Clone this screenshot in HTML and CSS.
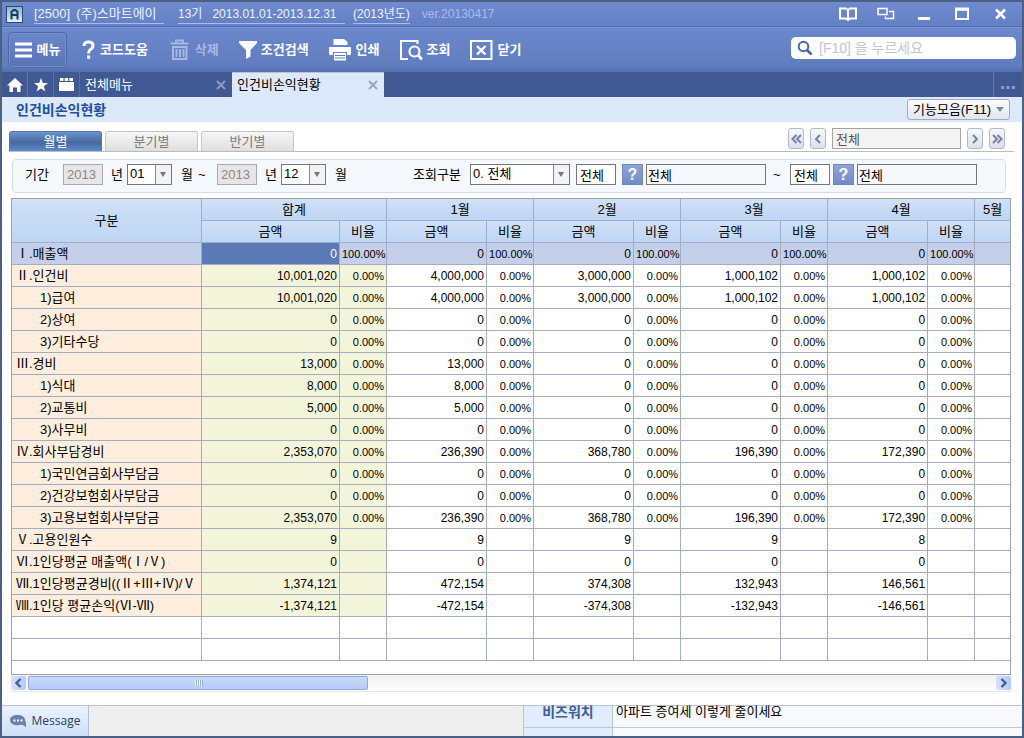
FILE: index.html
```html
<!DOCTYPE html>
<html lang="ko">
<head>
<meta charset="utf-8">
<title>인건비손익현황</title>
<link rel="stylesheet" href="styles.css">
</head>
<body>
<div class="window">
  <header class="titlebar">
    <svg class="app-icon" width="17" height="17" viewBox="0 0 17 17"><defs><linearGradient id="app" x2="0" y2="1"><stop stop-color="#7fb4cc"/><stop offset="1" stop-color="#e3f5f8"/></linearGradient></defs><rect x=".5" y=".5" width="16" height="16" fill="url(#app)" stroke="#2f4778"/><path d="M5.500 13.500V6L7.500 4H9.500L11.500 6V13.500M5.500 9H11.500" fill="none" stroke="#1d3b55" stroke-width="2"/></svg>
    <span class="company"><span>[2500]</span><span>(주)스마트에이</span></span>
    <span class="period"><span>13기</span><span>2013.01.01-2013.12.31</span></span>
    <span class="year">(2013년도)</span>
    <span class="version">ver.20130417</span>
    <div class="window-buttons">
      <button aria-label="도움말"><svg width="18" height="14" viewBox="0 0 18 14"><path d="M1 1.500H7L9 3L11 1.500H17V11.500H11L9 13L7 11.500H1ZM9 3V12" fill="none" stroke="#fff" stroke-width="2"/></svg></button>
      <button aria-label="창 전환"><svg width="18" height="14" viewBox="0 0 18 14"><path d="M1 1.500H10V7.500H1ZM12 4.500H16.500V11.500H8.500V9.500" fill="none" stroke="#fff" stroke-width="1.500"/></svg></button>
      <button aria-label="최소화"><svg width="18" height="14" viewBox="0 0 18 14"><path d="M3 11.500H15" stroke="#fff" stroke-width="3"/></svg></button>
      <button aria-label="최대화"><svg width="18" height="14" viewBox="0 0 18 14"><path d="M3 2.500H15V12H3Z" fill="none" stroke="#fff" stroke-width="2"/><path d="M2 2H16" stroke="#fff" stroke-width="3"/></svg></button>
      <button aria-label="닫기"><svg width="18" height="14" viewBox="0 0 18 14"><path d="M5 2.500L14 11.500M14 2.500L5 11.500" stroke="#fff" stroke-width="2.500"/></svg></button>
    </div>
  </header>

  <div class="toolbar">
    <button class="tool menu"><svg width="18" height="16" viewBox="0 0 18 16"><path d="M0 2H17M0 8H17M0 14H17" stroke="#fff" stroke-width="3"/></svg>메뉴</button>
    <button class="tool"><svg width="14" height="20" viewBox="0 0 14 20"><path d="M2 6Q2 2 6.500 2Q11 2 11 5.500Q11 8 8.500 9.500Q6.500 10.800 6.500 13.500" fill="none" stroke="#fff" stroke-width="3"/><rect x="5" y="15.500" width="3.200" height="3.200" fill="#fff"/></svg>코드도움</button>
    <button class="tool" disabled><svg width="23" height="22" viewBox="0 0 23 22"><path d="M2.500 4.500H20.500M8 4V1.500H15V4" fill="none" stroke="#a6b8e4" stroke-width="2"/><path d="M5 8H18.500V20H5ZM8.500 10V18M12 10V18M15.500 10V18" fill="none" stroke="#a6b8e4" stroke-width="2"/></svg>삭제</button>
    <button class="tool"><svg width="18" height="20" viewBox="0 0 18 20"><path d="M0 1H18V3L11.500 10V16.500L7 19V10L0 3Z" fill="#fff"/></svg>조건검색</button>
    <button class="tool"><svg width="23" height="22" viewBox="0 0 23 22"><path d="M4.500 0H15L18.500 3V6H4.500ZM0 8H22V16H18V13H4V16H0Z" fill="#fff"/><path d="M5 14H17V21.500H5Z" fill="#fff"/><path d="M6 16.500H16M6 19H16" stroke="#637fc2"/></svg>인쇄</button>
    <button class="tool"><svg width="23" height="22" viewBox="0 0 23 22"><path d="M8 20H1V2H17.500V5" fill="none" stroke="#fff" stroke-width="2"/><circle cx="14.500" cy="12.500" r="5" fill="none" stroke="#fff" stroke-width="2.200"/><path d="M18 16L22 20.500" stroke="#fff" stroke-width="2.800"/></svg>조회</button>
    <button class="tool"><svg width="23" height="22" viewBox="0 0 23 22"><path d="M1 2H21.500V20H1Z" fill="none" stroke="#fff" stroke-width="2"/><path d="M7 7L15.500 15.500M15.500 7L7 15.500" stroke="#fff" stroke-width="2.400"/></svg>닫기</button>
    <label class="search"><svg width="16" height="16" viewBox="0 0 16 16"><circle cx="6.500" cy="6.500" r="4.800" fill="none" stroke="#4867a8" stroke-width="2"/><path d="M10 10L14.500 14.500" stroke="#4867a8" stroke-width="2.600"/></svg><input type="text" aria-label="메뉴 검색" placeholder="[F10] 을 누르세요"></label>
  </div>

  <nav class="tabs">
    <button class="tab-icon" aria-label="홈"><svg width="16" height="14" viewBox="0 0 16 14"><path d="M8 0L16 7.500H13.500V14H10V9.500H6V14H2.500V7.500H0Z" fill="#fff"/></svg></button>
    <button class="tab-icon" aria-label="즐겨찾기"><svg width="14" height="14" viewBox="0 0 14 14"><path d="M7 0L8.800 5H14L9.800 8.300L11.400 13.500L7 10.400L2.600 13.500L4.200 8.300L0 5H5.200Z" fill="#fff"/></svg></button>
    <button class="tab-icon" aria-label="폴더"><svg width="15" height="13" viewBox="0 0 15 13"><path d="M1 0H4.500V3H1ZM5.700 0H9.200V3H5.700ZM10.400 0H14V3H10.400ZM0 4H15V13H0Z" fill="#fff"/></svg></button>
    <div class="tab"><a href="#all">전체메뉴</a><button aria-label="전체메뉴 탭 닫기"><svg width="10" height="10" viewBox="0 0 10 10"><path d="M1 1L9 9M9 1L1 9" stroke="#8d9cc2" stroke-width="2"/></svg></button></div>
    <div class="tab active"><a href="#labor">인건비손익현황</a><button aria-label="인건비손익현황 탭 닫기"><svg width="10" height="10" viewBox="0 0 10 10"><path d="M1 1L9 9M9 1L1 9" stroke="#9aa5b8" stroke-width="2"/></svg></button></div>
    <button class="more" aria-label="더보기"><svg width="14" height="3" viewBox="0 0 14 3"><path d="M0 0H3V3H0ZM5.500 0H8.500V3H5.500ZM11 0H14V3H11Z" fill="#8b9cc6"/></svg></button>
  </nav>

  <div class="page-title">
    <h1>인건비손익현황</h1>
    <button>기능모음(F11)<span class="caret"></span></button>
  </div>

  <main>
    <div class="view-bar">
      <div class="views"><button class="selected">월별</button><button>분기별</button><button>반기별</button></div>
      <div class="pager">
        <button aria-label="처음"><svg width="11" height="10" viewBox="0 0 11 10"><path d="M5.500 1L1.500 5L5.500 9M10 1L6 5L10 9" fill="none" stroke="#7482a4" stroke-width="2"/></svg></button>
        <button aria-label="이전"><svg width="6" height="10" viewBox="0 0 6 10"><path d="M5 1L1 5L5 9" fill="none" stroke="#7482a4" stroke-width="2"/></svg></button>
        <input type="text" aria-label="대상" value="전체" readonly>
        <button aria-label="다음"><svg width="6" height="10" viewBox="0 0 6 10"><path d="M1 1L5 5L1 9" fill="none" stroke="#7482a4" stroke-width="2"/></svg></button>
        <button aria-label="마지막"><svg width="11" height="10" viewBox="0 0 11 10"><path d="M1 1L5 5L1 9M5.500 1L9.500 5L5.500 9" fill="none" stroke="#7482a4" stroke-width="2"/></svg></button>
      </div>
    </div>

    <form class="filter">
      <label for="y1">기간</label><input id="y1" type="text" value="2013" disabled>
      <label for="m1">년</label><span class="select"><select id="m1"><option>01</option></select></span>
      <span>월</span><span>~</span>
      <input id="y2" aria-label="종료 연도" type="text" value="2013" disabled>
      <label for="m2">년</label><span class="select"><select id="m2"><option>12</option></select></span>
      <span>월</span>
      <label for="kind">조회구분</label><span class="select"><select id="kind"><option>0. 전체</option></select></span>
      <input type="text" aria-label="시작 코드" value="전체">
      <button type="button" class="lookup" aria-label="시작 코드 찾기">?</button>
      <input class="name" type="text" aria-label="시작 이름" value="전체" readonly>
      <span>~</span>
      <input type="text" aria-label="종료 코드" value="전체">
      <button type="button" class="lookup" aria-label="종료 코드 찾기">?</button>
      <input class="name" type="text" aria-label="종료 이름" value="전체" readonly>
    </form>

    <div class="grid">
      <table>
        <colgroup><col class="c-name"><col class="c-total"><col class="c-rate"><col class="c-amount"><col class="c-rate"><col class="c-amount"><col class="c-rate"><col class="c-amount"><col class="c-rate"><col class="c-amount"><col class="c-rate"><col></colgroup>
        <thead>
          <tr><th rowspan="2">구분</th><th colspan="2">합계</th><th colspan="2">1월</th><th colspan="2">2월</th><th colspan="2">3월</th><th colspan="2">4월</th><th>5월</th></tr>
          <tr><th>금액</th><th>비율</th><th>금액</th><th>비율</th><th>금액</th><th>비율</th><th>금액</th><th>비율</th><th>금액</th><th>비율</th><th></th></tr>
        </thead>
        <tbody>
          <tr class="current"><th>Ⅰ.매출액</th><td class="cursor">0</td><td>100.00%</td><td>0</td><td>100.00%</td><td>0</td><td>100.00%</td><td>0</td><td>100.00%</td><td>0</td><td>100.00%</td><td></td></tr>
          <tr><th>Ⅱ.인건비</th><td>10,001,020</td><td>0.00%</td><td>4,000,000</td><td>0.00%</td><td>3,000,000</td><td>0.00%</td><td>1,000,102</td><td>0.00%</td><td>1,000,102</td><td>0.00%</td><td></td></tr>
          <tr><th class="sub">1)급여</th><td>10,001,020</td><td>0.00%</td><td>4,000,000</td><td>0.00%</td><td>3,000,000</td><td>0.00%</td><td>1,000,102</td><td>0.00%</td><td>1,000,102</td><td>0.00%</td><td></td></tr>
          <tr><th class="sub">2)상여</th><td>0</td><td>0.00%</td><td>0</td><td>0.00%</td><td>0</td><td>0.00%</td><td>0</td><td>0.00%</td><td>0</td><td>0.00%</td><td></td></tr>
          <tr><th class="sub">3)기타수당</th><td>0</td><td>0.00%</td><td>0</td><td>0.00%</td><td>0</td><td>0.00%</td><td>0</td><td>0.00%</td><td>0</td><td>0.00%</td><td></td></tr>
          <tr><th>Ⅲ.경비</th><td>13,000</td><td>0.00%</td><td>13,000</td><td>0.00%</td><td>0</td><td>0.00%</td><td>0</td><td>0.00%</td><td>0</td><td>0.00%</td><td></td></tr>
          <tr><th class="sub">1)식대</th><td>8,000</td><td>0.00%</td><td>8,000</td><td>0.00%</td><td>0</td><td>0.00%</td><td>0</td><td>0.00%</td><td>0</td><td>0.00%</td><td></td></tr>
          <tr><th class="sub">2)교통비</th><td>5,000</td><td>0.00%</td><td>5,000</td><td>0.00%</td><td>0</td><td>0.00%</td><td>0</td><td>0.00%</td><td>0</td><td>0.00%</td><td></td></tr>
          <tr><th class="sub">3)사무비</th><td>0</td><td>0.00%</td><td>0</td><td>0.00%</td><td>0</td><td>0.00%</td><td>0</td><td>0.00%</td><td>0</td><td>0.00%</td><td></td></tr>
          <tr><th>Ⅳ.회사부담경비</th><td>2,353,070</td><td>0.00%</td><td>236,390</td><td>0.00%</td><td>368,780</td><td>0.00%</td><td>196,390</td><td>0.00%</td><td>172,390</td><td>0.00%</td><td></td></tr>
          <tr><th class="sub">1)국민연금회사부담금</th><td>0</td><td>0.00%</td><td>0</td><td>0.00%</td><td>0</td><td>0.00%</td><td>0</td><td>0.00%</td><td>0</td><td>0.00%</td><td></td></tr>
          <tr><th class="sub">2)건강보험회사부담금</th><td>0</td><td>0.00%</td><td>0</td><td>0.00%</td><td>0</td><td>0.00%</td><td>0</td><td>0.00%</td><td>0</td><td>0.00%</td><td></td></tr>
          <tr><th class="sub">3)고용보험회사부담금</th><td>2,353,070</td><td>0.00%</td><td>236,390</td><td>0.00%</td><td>368,780</td><td>0.00%</td><td>196,390</td><td>0.00%</td><td>172,390</td><td>0.00%</td><td></td></tr>
          <tr><th>Ⅴ.고용인원수</th><td>9</td><td></td><td>9</td><td></td><td>9</td><td></td><td>9</td><td></td><td>8</td><td></td><td></td></tr>
          <tr><th>Ⅵ.1인당평균 매출액(Ⅰ/Ⅴ)</th><td>0</td><td></td><td>0</td><td></td><td>0</td><td></td><td>0</td><td></td><td>0</td><td></td><td></td></tr>
          <tr><th>Ⅶ.1인당평균경비((Ⅱ+Ⅲ+Ⅳ)/Ⅴ</th><td>1,374,121</td><td></td><td>472,154</td><td></td><td>374,308</td><td></td><td>132,943</td><td></td><td>146,561</td><td></td><td></td></tr>
          <tr><th>Ⅷ.1인당 평균손익(Ⅵ-Ⅶ)</th><td>-1,374,121</td><td></td><td>-472,154</td><td></td><td>-374,308</td><td></td><td>-132,943</td><td></td><td>-146,561</td><td></td><td></td></tr>
          <tr class="blank"><td></td><td></td><td></td><td></td><td></td><td></td><td></td><td></td><td></td><td></td><td></td><td></td></tr>
          <tr class="blank"><td></td><td></td><td></td><td></td><td></td><td></td><td></td><td></td><td></td><td></td><td></td><td></td></tr>
        </tbody>
      </table>
    </div>
    <div class="scrollbar">
      <button aria-label="왼쪽으로"><svg width="7" height="10" viewBox="0 0 7 10"><path d="M5.500 1L1.500 5L5.500 9" fill="none" stroke="#3f5f9a" stroke-width="2.400"/></svg></button>
      <div class="thumb"><i></i><i></i><i></i><i></i></div>
      <button class="right" aria-label="오른쪽으로"><svg width="7" height="10" viewBox="0 0 7 10"><path d="M1.500 1L5.500 5L1.500 9" fill="none" stroke="#3f5f9a" stroke-width="2.400"/></svg></button>
    </div>
  </main>

  <footer>
    <button class="message"><svg width="17" height="13" viewBox="0 0 17 13"><path d="M7.500 0C12 0 15 2 15 5C15 6 16.500 7 16 12.500C15 10.500 13 10 11.500 9.800C4 11.500 0 8.500 0 5C0 2 3 0 7.500 0Z" fill="#6a7fac"/><path d="M3.500 5.500H5.500M7 5.500H9M10.500 5.500H12.500" stroke="#fff" stroke-width="2"/></svg>Message</button>
    <div class="status"></div>
    <div class="news"><strong>비즈워치</strong><a href="#news">아파트 증여세 이렇게 줄이세요</a><span class="next-label"></span><span></span></div>
  </footer>
</div>
</body>
</html>
```

FILE: styles.css
```css
* { box-sizing: border-box; }
body {
  margin: 0;
  font: 13px/16px "Liberation Sans", "Noto Sans CJK KR", sans-serif;
  color: #000;
}
button, input, select { font: inherit; color: inherit; margin: 0; }
button { padding: 0; border: 0; background: none; }
a { color: inherit; text-decoration: none; }
svg { display: block; flex: none; }

.window {
  display: flex;
  flex-direction: column;
  min-height: 100vh;
  border: 2px solid #4c6084;
  background: #fff;
}

/* Title bar */
.titlebar {
  display: flex;
  align-items: center;
  height: 25px;
  padding: 0 13px 0 4px;
  border-bottom: 1px solid #506cae;
  background: linear-gradient(#6f8ace, #6480c5);
  color: #eef3ff;
  font-size: 12px;
}
.company, .period, .year {
  display: flex;
  height: 20px;
  align-items: center;
  border-bottom: 1px solid #a9bdeb;
}
.company { width: 130px; gap: 6px; margin-left: 11px; font-size: 13px; }
.period { width: 167px; gap: 10px; margin-left: 14px; }
.year { margin-left: 8px; }
.version { margin-left: 12px; font-size: 12px; color: #a9bcec; }
.window-buttons { display: flex; gap: 20px; margin-left: auto; }

/* Toolbar */
.toolbar {
  display: flex;
  align-items: center;
  gap: 20px;
  height: 45px;
  padding: 0 6px 0 6px;
  border-top: 1px solid #7a94d5;
  background: linear-gradient(#6c88cd, #607dbf 85%, #536fb0);
}
.tool {
  display: flex;
  align-items: center;
  gap: 4px;
  color: #fff;
  font-weight: bold;
  white-space: nowrap;
}
.tool:disabled { color: #a6b8e4; }
.menu {
  width: 59px;
  height: 36px;
  justify-content: center;
  margin-right: -5px;
  border: 1px solid #5069a7;
  border-radius: 4px;
  background: linear-gradient(#6c87ca, #5873b6);
  box-shadow: inset 0 0 0 1px #738dcf;
}
.search {
  display: flex;
  align-items: center;
  gap: 6px;
  width: 225px;
  height: 22px;
  margin: 0 0 4px auto;
  padding: 0 6px;
  border-radius: 5px;
  background: #fff;
  font-size: 14px;
}
.search input { width: 100%; min-width: 0; padding: 0; border: 0; outline: 0; background: none; }
.search input::placeholder { color: #c4c6ca; opacity: 1; }

/* Document tabs */
.tabs { display: flex; height: 25px; background: #415993; color: #fff; }
.tab-icon {
  display: flex;
  width: 26px;
  align-items: center;
  justify-content: center;
  border-right: 1px solid #5870a6;
}
.tab {
  display: flex;
  align-items: center;
  justify-content: space-between;
  width: 152px;
  padding: 0 6px 0 5px;
}
.tab.active { background: #dce9fa; color: #000; border-top: 1px solid #b9c3d2; }
.more {
  display: flex;
  width: 29px;
  margin-left: auto;
  align-items: center;
  justify-content: center;
  padding-top: 6px;
  border-left: 1px solid #617bb2;
}

.page-title {
  display: flex;
  align-items: center;
  justify-content: space-between;
  height: 25px;
  padding: 0 12px 0 14px;
  background: #dce9fa;
}
h1 { margin: 0; font-size: 14px; color: #1d4f9c; }
.page-title button {
  display: flex;
  align-items: center;
  justify-content: center;
  gap: 5px;
  width: 103px;
  height: 21px;
  border: 1px solid #a5adba;
  border-radius: 3px;
  background: linear-gradient(#fbfcfe, #e1e6ee);
}
.caret { border: 4px solid transparent; border-top: 5px solid #808998; border-bottom: 0; }

main { flex: 1; padding: 6px 11px 13px 9px; }

/* View switch and pager */
.view-bar {
  display: flex;
  justify-content: space-between;
  align-items: flex-end;
  height: 24px;
  margin: 0 -3px 7px -2px;
  border-bottom: 1px solid #bcbcc0;
}
.views { display: flex; gap: 3px; }
.views button {
  width: 93px;
  height: 20px;
  border: 1px solid #c6c6c6;
  border-bottom: 0;
  border-radius: 3px 3px 0 0;
  background: linear-gradient(#f6f6f6, #dfdfdf);
  color: #7c7c7c;
}
.views .selected {
  border-color: #5276b0;
  background: linear-gradient(#6c93cc, #46699f 55%, #5d8bcd);
  color: #fff;
}
.pager { display: flex; gap: 6px; padding: 0 9px 2px 0; }
.pager button {
  display: flex;
  align-items: center;
  justify-content: center;
  width: 16px;
  height: 21px;
  border: 1px solid #b3b9c9;
  border-radius: 3px;
  background: linear-gradient(#f7f8fc, #dce0ea);
}
.pager input {
  width: 129px;
  height: 21px;
  padding: 0 3px;
  border: 1px solid #a3a3a3;
  background: #f4f4f4;
  color: #555;
}

/* Filter */
.filter {
  display: grid;
  grid-template-columns: 38px 48px 16px 54px 17px 19px 48px 16px 54px 78px 57px 106px 46px 24px 127px 17px 43px 24px 120px;
  align-items: center;
  height: 34px;
  margin: 0 5px 5px 1px;
  padding: 0 0 3px 12px;
  border: 1px solid #d3dde9;
  border-radius: 4px;
  background: #f5f8fd;
}
.filter input {
  width: 40px;
  height: 21px;
  padding: 0 3px;
  border: 1px solid #777;
  background: #fff;
}
.filter input:disabled { border-color: #a9a9a9; background: #e7e5e5; color: #8a8a8a; }
.filter .name { width: 120px; padding: 0 1px; background: #f5f8fd; }
.select { position: relative; display: flex; height: 21px; }
.select select {
  appearance: none;
  width: 45px;
  padding: 0 2px 2px;
  border: 1px solid #777;
  border-radius: 0;
  background: linear-gradient(90deg, #8b8b8b 1px, #f3f3f5 1px) right / 16px 100% no-repeat #fff;
}
#kind { width: 100px; }
.select::after {
  content: "";
  position: absolute;
  left: 33px;
  top: 8px;
  border: 3px solid transparent;
  border-top: 5px solid #777;
  border-bottom: 0;
  pointer-events: none;
}
.select:has(#kind)::after { left: 88px; }
.lookup {
  width: 21px;
  height: 21px;
  border: 1px solid #7188bd;
  background: linear-gradient(#91a5d5, #718bc6);
  color: #fff;
  font-size: 16px;
  font-weight: bold;
}

/* Data grid */
.grid { min-height: 477px; border: 1px solid #9ca2b4; overflow: hidden; }
table { width: 100%; border-spacing: 0; table-layout: fixed; }
.c-name { width: 190px; }
.c-total { width: 138px; }
.c-amount { width: 100px; }
.c-rate { width: 47px; }
th, td {
  height: 22px;
  padding: 0 2px;
  border: solid #a6abbf;
  border-width: 0 1px 1px 0;
  line-height: 20px;
  font-weight: normal;
  white-space: nowrap;
  overflow: hidden;
}
tr > :last-child { border-right: 0; }
thead th { border-color: #9dafcd; background: linear-gradient(#d0e1f8, #bfd5f3); }
tbody th { padding-left: 4px; background: #ffeedd; text-align: left; }
tbody .sub { padding-left: 28px; }
td { font-size: 12px; text-align: right; }
td:nth-child(odd) { font-size: 11px; }
td:nth-child(2), td:nth-child(3) { background: #f2f5da; }
.current th, .current td, .current td:nth-child(3) { background: #c4cfe9; }
.current .cursor { background: #5c79b7; color: #fff; }
.blank td, .blank td:nth-child(n) { background: #fff; }

.scrollbar {
  display: flex;
  height: 17px;
  gap: 2px;
  padding: 1px 0;
  border-bottom: 1px solid #e6e6df;
  background: linear-gradient(#f0f0ed, #fff);
}
.scrollbar button {
  display: flex;
  align-items: center;
  justify-content: center;
  width: 15px;
  border-radius: 2px;
  background: linear-gradient(90deg, #d7e2fc, #b5c9f7);
}
.scrollbar .right { margin-left: auto; }
.thumb {
  display: flex;
  align-items: center;
  justify-content: center;
  gap: 1px;
  width: 34%;
  border: 1px solid #8faadd;
  border-radius: 2px;
  background: linear-gradient(#cbdafb, #b5caf6);
}
.thumb i { width: 1px; height: 6px; background: #fff; box-shadow: 1px 0 #8ea9dc; }

/* Footer */
footer { display: flex; height: 31px; border-top: 1px solid #bcc0c8; background: #efefef; }
.message {
  display: flex;
  align-items: center;
  justify-content: center;
  gap: 5px;
  width: 87px;
  border-right: 1px solid #b4bfd3;
  background: linear-gradient(#eaf2fe, #cfdff8);
  color: #2b4069;
  font-family: "Open Sans", "Noto Sans", sans-serif;
  font-size: 12px;
}
.status { flex: 434; }
.news {
  flex: 499;
  display: grid;
  grid-template-columns: 90px 1fr;
  grid-template-rows: 22px 8px;
  background: #f7f9fd;
}
.news > * { border-bottom: 1px solid #bccbdc; line-height: 12px; padding-left: 3px; }
.news strong, .next-label {
  padding: 0;
  border-right: 1px solid #b5c4d6;
  border-left: 1px solid #b5c4d6;
  background: #e1edfd;
  color: #3e5d98;
  font-size: 14px;
  text-align: center;
}
.news > :nth-child(n+3) { border-bottom: 0; }
```
